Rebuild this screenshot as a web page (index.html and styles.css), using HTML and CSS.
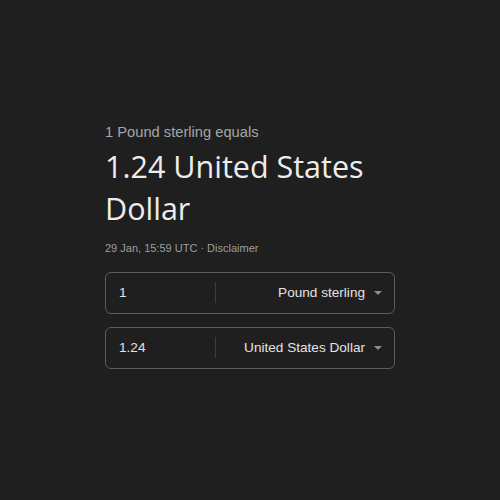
FILE: index.html
```html
<!DOCTYPE html>
<html lang="en">
<head>
<meta charset="UTF-8">
<meta name="viewport" content="width=device-width, initial-scale=1.0">
<title>Currency converter</title>
<link rel="stylesheet" href="styles.css">
</head>
<body>

<div class="converter">
  <div class="equals">1 Pound sterling equals</div>
  <div class="result">1.24 United States Dollar</div>
  <div class="meta">29 Jan, 15:59 UTC · Disclaimer</div>

  <div class="field">
    <input type="text" class="amount" value="1">
    <span class="divider"></span>
    <div class="currency">
      <span>Pound sterling</span>
      <span class="caret"></span>
    </div>
  </div>

  <div class="field">
    <input type="text" class="amount" value="1.24">
    <span class="divider"></span>
    <div class="currency">
      <span>United States Dollar</span>
      <span class="caret"></span>
    </div>
  </div>
</div>

</body>
</html>
```

FILE: styles.css
```css
body {
  margin: 0;
  background-color: #1f1f1f;
  font-family: "Liberation Sans", Arial, sans-serif;
  display: flex;
  justify-content: center;
  align-items: center;
  min-height: 100vh;
}
.converter {
  width: 290px;
  margin-top: 3px;
}
.equals {
  color: #a6a6a6;
  font-size: 14.7px;
  line-height: 20px;
}
.result {
  color: #ececec;
  font-family: "Open Sans", Roboto, sans-serif;
  font-size: 30.5px;
  line-height: 42px;
  margin-top: 3px;
}
.meta {
  color: #9e9e9e;
  font-size: 11px;
  line-height: 16px;
  margin-top: 11px;
  margin-bottom: 16px;
}
.field {
  display: flex;
  align-items: center;
  height: 40px;
  border: 1px solid #5c5c5c;
  border-radius: 6px;
  margin-bottom: 13px;
}
.amount {
  width: 96px;
  padding: 0 0 0 13px;
  background: none;
  border: none;
  outline: none;
  color: #e3e3e3;
  font-family: inherit;
  font-size: 13.6px;
}
.divider {
  width: 1px;
  height: 21px;
  background-color: #3e3e3e;
}
.currency {
  flex: 1;
  display: flex;
  justify-content: flex-end;
  align-items: center;
  gap: 9px;
  padding-right: 12px;
  color: #e3e3e3;
  font-size: 13.6px;
}
.caret {
  width: 0;
  height: 0;
  border-left: 4px solid transparent;
  border-right: 4px solid transparent;
  border-top: 4px solid #8e8e8e;
}
```
